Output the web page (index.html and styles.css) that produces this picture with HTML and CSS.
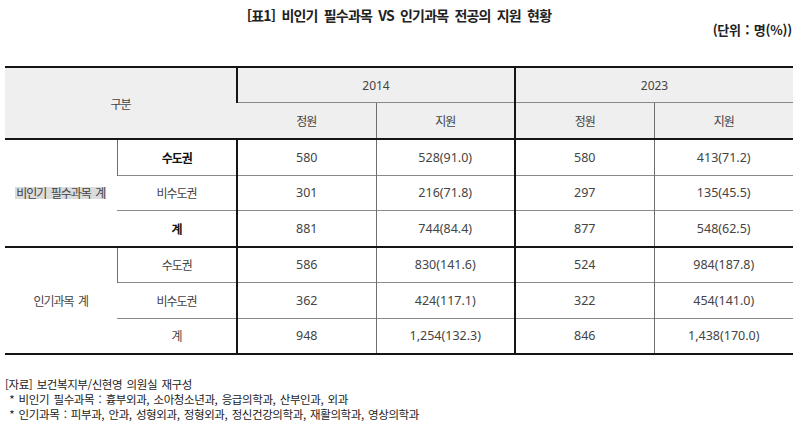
FILE: index.html
```html
<!DOCTYPE html>
<html lang="ko">
<head>
<meta charset="utf-8">
<title>비인기 필수과목 VS 인기과목 전공의 지원 현황</title>
<link rel="stylesheet" href="styles.css">
</head>
<body>
<div class="page">
  <h1 class="title">[표1] 비인기 필수과목 VS 인기과목 전공의 지원 현황</h1>
  <div class="unit">(단위 : 명(%))</div>
  <table class="grid">
    <colgroup>
      <col class="c1"><col class="c2"><col class="c3"><col class="c3"><col class="c3"><col class="c3">
    </colgroup>
    <thead>
      <tr class="h1">
        <th colspan="2" rowspan="2" class="ko">구분</th>
        <th colspan="2" class="thick-l">2014</th>
        <th colspan="2" class="thick-l">2023</th>
      </tr>
      <tr class="h2">
        <th class="ko thick-l">정원</th>
        <th class="ko">지원</th>
        <th class="ko thick-l">정원</th>
        <th class="ko">지원</th>
      </tr>
    </thead>
    <tbody class="sec">
      <tr>
        <td rowspan="3" class="ko"><span class="hl">비인기 필수과목 계</span></td>
        <td class="ko strong">수도권</td>
        <td class="thick-l">580</td><td>528(91.0)</td>
        <td class="thick-l">580</td><td>413(71.2)</td>
      </tr>
      <tr>
        <td class="ko">비수도권</td>
        <td class="thick-l">301</td><td>216(71.8)</td>
        <td class="thick-l">297</td><td>135(45.5)</td>
      </tr>
      <tr>
        <td class="ko strong">계</td>
        <td class="thick-l">881</td><td>744(84.4)</td>
        <td class="thick-l">877</td><td>548(62.5)</td>
      </tr>
    </tbody>
    <tbody class="sec">
      <tr>
        <td rowspan="3" class="ko">인기과목 계</td>
        <td class="ko">수도권</td>
        <td class="thick-l">586</td><td>830(141.6)</td>
        <td class="thick-l">524</td><td>984(187.8)</td>
      </tr>
      <tr>
        <td class="ko">비수도권</td>
        <td class="thick-l">362</td><td>424(117.1)</td>
        <td class="thick-l">322</td><td>454(141.0)</td>
      </tr>
      <tr>
        <td class="ko">계</td>
        <td class="thick-l">948</td><td>1,254(132.3)</td>
        <td class="thick-l">846</td><td>1,438(170.0)</td>
      </tr>
    </tbody>
  </table>
  <div class="notes">
    <p>[자료] 보건복지부/신현영 의원실 재구성</p>
    <p>&nbsp;* 비인기 필수과목 : 흉부외과, 소아청소년과, 응급의학과, 산부인과, 외과</p>
    <p>&nbsp;* 인기과목 : 피부과, 안과, 성형외과, 정형외과, 정신건강의학과, 재활의학과, 영상의학과</p>
  </div>
</div>
</body>
</html>
```
FILE: styles.css
```css
html, body {
  margin: 0;
  padding: 0;
  background: #ffffff;
}
.page {
  width: 800px;
  padding: 7px 0 0 5px;
  box-sizing: border-box;
  font-family: "Noto Sans", "Noto Sans CJK KR", sans-serif;
  color: #222;
}
.title {
  margin: 0;
  width: 788px;
  text-align: center;
  font-family: "Noto Sans CJK KR", sans-serif;
  font-weight: 700;
  font-size: 14px;
  letter-spacing: -0.8px;
  word-spacing: 3px;
  line-height: 16px;
  color: #222;
}
.unit {
  width: 787px;
  text-align: right;
  font-family: "Noto Sans CJK KR", sans-serif;
  font-weight: 700;
  font-size: 13px;
  letter-spacing: -0.2px;
  word-spacing: 1px;
  line-height: 14px;
  color: #222;
}
.grid {
  margin-top: 29px;
  width: 788px;
  border-collapse: collapse;
  table-layout: fixed;
  font-size: 12.5px;
  color: #444;
}
.c1 { width: 112px; }
.c2 { width: 120px; }
.c3 { width: 139px; }
.grid th,
.grid td {
  padding: 0;
  text-align: center;
  vertical-align: middle;
  font-weight: 400;
  border-left: 1px solid #6e6e6e;
  border-top: 1px solid #8a8a8a;
}
.grid th {
  background: #efefef;
  font-size: 12px;
}
.grid tr > :first-child { border-left: none; }
.grid thead tr:first-child th { border-top: 2px solid #151515; }
.grid .sec tr:first-child td { border-top: 2px solid #151515; }
.grid .sec:last-child tr:last-child td { border-bottom: 2px solid #151515; }
.grid .sec td[rowspan] { border-bottom: 2px solid #151515; }
.grid .thick-l { border-left: 2px solid #151515; }
.grid .h1 th { height: 34px; }
.grid .h2 th { height: 35px; }
.grid tbody td { height: 34.5px; }
.grid .ko {
  font-family: "Noto Sans CJK KR", sans-serif;
  font-size: 12px;
  letter-spacing: -1px;
  word-spacing: 2px;
}
.grid .strong {
  font-weight: 700;
  color: #111;
}
.hl {
  display: inline-block;
  background: #dcdcdc;
  line-height: 12px;
  padding: 0 1px;
}
.notes {
  margin-top: 22px;
  font-family: "Noto Sans CJK KR", sans-serif;
  font-size: 11.5px;
  letter-spacing: -0.4px;
  word-spacing: 1.5px;
  color: #222;
}
.notes p {
  margin: 0;
  line-height: 15px;
}
```
